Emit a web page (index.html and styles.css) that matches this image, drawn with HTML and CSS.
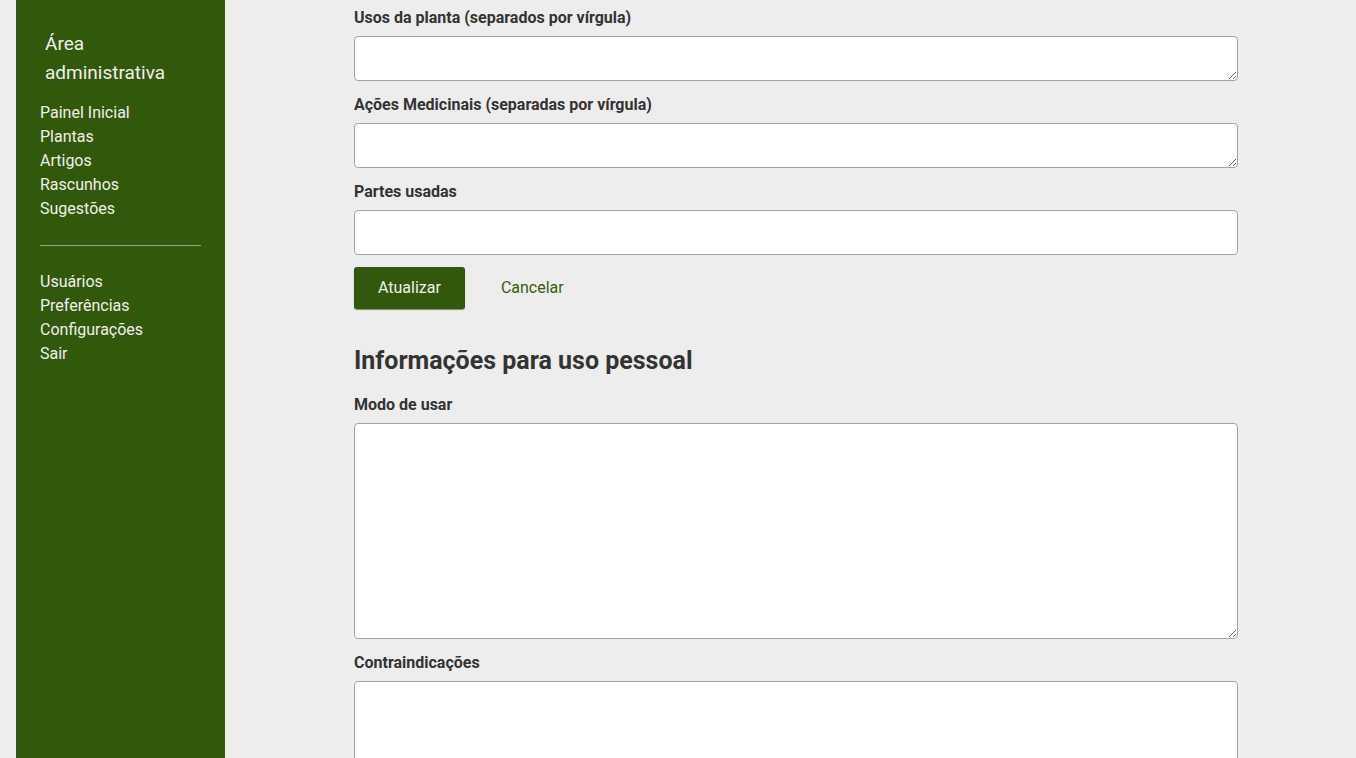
FILE: index.html
```html
<!DOCTYPE html>
<html lang="pt-BR">
<head>
<meta charset="utf-8">
<title>Área administrativa</title>
<link rel="stylesheet" href="styles.css">
</head>
<body>
<div class="layout">
  <aside class="sidebar">
    <div class="brand">Área<br>administrativa</div>
    <nav class="nav">
      <a href="#">Painel Inicial</a>
      <a href="#">Plantas</a>
      <a href="#">Artigos</a>
      <a href="#">Rascunhos</a>
      <a href="#">Sugestões</a>
    </nav>
    <hr class="divider">
    <nav class="nav">
      <a href="#">Usuários</a>
      <a href="#">Preferências</a>
      <a href="#">Configurações</a>
      <a href="#">Sair</a>
    </nav>
  </aside>
  <main class="main">
    <form class="form">
      <label class="label">Usos da planta (separados por vírgula)</label>
      <textarea class="field area-small"></textarea>
      <label class="label">Ações Medicinais (separadas por vírgula)</label>
      <textarea class="field area-small"></textarea>
      <label class="label">Partes usadas</label>
      <input class="field input" type="text">
      <div class="actions">
        <button type="button" class="btn">Atualizar</button>
        <a href="#" class="cancel">Cancelar</a>
      </div>
      <h2 class="section-title">Informações para uso pessoal</h2>
      <label class="label">Modo de usar</label>
      <textarea class="field area-large"></textarea>
      <label class="label">Contraindicações</label>
      <textarea class="field area-large"></textarea>
    </form>
  </main>
</div>
</body>
</html>
```

FILE: styles.css
```css
html, body {
  margin: 0;
  padding: 0;
  background: #ededed;
  font-family: Roboto, "Liberation Sans", Arial, sans-serif;
  color: #333;
}
.layout {
  display: flex;
  padding-left: 16px;
  height: 758px;
  overflow: hidden;
}
.sidebar {
  width: 209px;
  flex: 0 0 209px;
  background: #32580c;
  box-sizing: border-box;
  padding: 29px 24px 0 24px;
  color: #f0f0ea;
}
.brand {
  font-size: 19px;
  line-height: 29px;
  padding-left: 5px;
  margin-bottom: 14px;
}
.nav {
  display: flex;
  flex-direction: column;
}
.nav a {
  color: #f0f0ea;
  text-decoration: none;
  font-size: 16px;
  line-height: 24px;
}
.divider {
  border: 0;
  height: 1px;
  background: #9aa393;
  margin: 24px 0 24px 0;
}
.main {
  flex: 1;
  padding-left: 129px;
  padding-top: 8px;
}
.form {
  width: 884px;
  display: flex;
  flex-direction: column;
}
.label {
  font-size: 16px;
  font-weight: bold;
  line-height: 18px;
  padding-top: 1px;
  margin-bottom: 9px;
  color: #333;
}
.field {
  box-sizing: border-box;
  width: 884px;
  border: 1px solid #a3a3a3;
  border-radius: 4px;
  background: #fff;
  font-family: inherit;
  font-size: 15px;
  margin: 0 0 14px 0;
  padding: 6px 10px;
}
.area-small {
  height: 45px;
  resize: vertical;
}
.input {
  height: 45px;
  margin-bottom: 12px;
}
.area-large {
  height: 216px;
  resize: vertical;
}
.actions {
  display: flex;
  align-items: center;
}
.btn {
  height: 42px;
  padding: 0 24px 2px 24px;
  background: #32580c;
  color: #f0f0ea;
  border: 0;
  border-radius: 3px;
  font-family: inherit;
  font-size: 16px;
  box-shadow: 0 1px 1px rgba(0,0,0,0.45);
  cursor: pointer;
}
.cancel {
  margin-left: 36px;
  color: #3a5a10;
  text-decoration: none;
  font-size: 16px;
  line-height: 42px;
}
.section-title {
  margin: 37px 0 19px 0;
  font-size: 25px;
  line-height: 30px;
  font-weight: bold;
  color: #333;
}
```
